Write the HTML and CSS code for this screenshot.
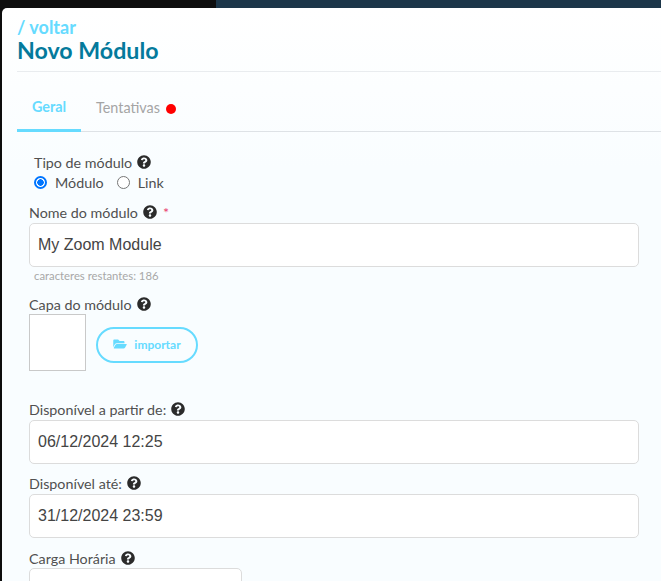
FILE: index.html
```html
<!DOCTYPE html>
<html lang="pt">
<head>
<meta charset="utf-8">
<title>Novo Módulo</title>
<link rel="stylesheet" href="styles.css">
</head>
<body>
<svg class="sprite" width="0" height="0" aria-hidden="true">
  <symbol id="q" viewBox="0 0 512 512"><path d="M504 256c0 136.997-111.043 248-248 248S8 392.997 8 256C8 119.083 119.043 8 256 8s248 111.083 248 248zM262.655 90c-54.497 0-89.255 22.957-116.549 63.758-3.536 5.286-2.353 12.415 2.715 16.258l34.699 26.31c5.205 3.947 12.621 3.008 16.665-2.122 17.864-22.658 30.113-35.797 57.303-35.797 20.429 0 45.698 13.148 45.698 32.958 0 14.976-12.363 22.667-32.534 33.976C247.128 238.528 216 254.941 216 296v4c0 6.627 5.373 12 12 12h56c6.627 0 12-5.373 12-12v-1.333c0-28.462 83.186-29.647 83.186-106.667 0-58.002-60.165-102-116.531-102zM256 338c-25.365 0-46 20.635-46 46 0 25.364 20.635 46 46 46s46-20.636 46-46c0-25.365-20.635-46-46-46z"/></symbol>
</svg>
<div class="backdrop"><div class="backdrop-dark"></div><div class="backdrop-blue"></div></div>
<main class="card">
  <header class="head">
    <a class="back">/ voltar</a>
    <h1 class="title">Novo Módulo</h1>
  </header>
  <nav class="tabs">
    <a class="tab tab-active">Geral</a>
    <a class="tab">Tentativas <span class="dot"></span></a>
  </nav>
  <form class="form">
    <div class="type-group">
      <div class="label">Tipo de módulo <svg class="help"><use href="#q"/></svg></div>
      <div class="radios">
        <label class="radio"><span class="radio-mark radio-on"></span>Módulo</label>
        <label class="radio"><span class="radio-mark"></span>Link</label>
      </div>
    </div>
    <div class="field field-name">
      <div class="label">Nome do módulo <svg class="help"><use href="#q"/></svg> <span class="req">*</span></div>
      <div class="input">My Zoom Module</div>
      <div class="hint">caracteres restantes: 186</div>
    </div>
    <div class="field field-cover">
      <div class="label">Capa do módulo <svg class="help"><use href="#q"/></svg></div>
      <div class="cover-row">
        <div class="cover"></div>
        <button type="button" class="import">
          <svg class="folder" viewBox="0 0 576 512"><path d="M572.694 292.093L500.27 416.248A63.997 63.997 0 0 1 444.989 448H45.025c-18.523 0-30.064-20.093-20.731-36.093l72.424-124.155A64 64 0 0 1 152 256h399.964c18.523 0 30.064 20.093 20.73 36.093zM152 224h328v-48c0-26.51-21.49-48-48-48H272l-64-64H48C21.49 64 0 85.49 0 112v278.046l69.077-118.418C86.214 242.25 117.989 224 152 224z"/></svg>
          importar
        </button>
      </div>
    </div>
    <div class="field field-from">
      <div class="label">Disponível a partir de: <svg class="help"><use href="#q"/></svg></div>
      <div class="input">06/12/2024 12:25</div>
    </div>
    <div class="field field-until">
      <div class="label">Disponível até: <svg class="help"><use href="#q"/></svg></div>
      <div class="input">31/12/2024 23:59</div>
    </div>
    <div class="field field-load">
      <div class="label">Carga Horária <svg class="help"><use href="#q"/></svg></div>
      <div class="input input-short"></div>
    </div>
  </form>
</main>
</body>
</html>
```
FILE: styles.css
```css
* { box-sizing: border-box; }
html, body { height: 100%; }
body {
  margin: 0;
  background: #0d0d0d;
  overflow: hidden;
  font-family: Lato, "Noto Sans", sans-serif;
  color: #505050;
}
.sprite { position: absolute; }
.backdrop { display: flex; height: 8px; }
.backdrop-dark { width: 216px; background: #0e0e0e; }
.backdrop-blue { flex: 1; background: #1c3649; }
.card {
  margin-left: 2px;
  height: 573px;
  padding-left: 15px;
  border-radius: 5px 0 0 0;
  background: linear-gradient(#ffffff, #f9fdff 160px);
  overflow: hidden;
}
.head {
  height: 64px;
  padding-top: 9px;
  border-bottom: 1px solid #e9ecef;
}
.back {
  display: block;
  font-size: 18px;
  font-weight: 700;
  line-height: 20px;
  color: #66dbff;
}
.title {
  margin: 0;
  font-size: 23.2px;
  font-weight: 700;
  line-height: 27px;
  color: #047a9c;
}
.tabs {
  display: flex;
  height: 60px;
  border-bottom: 1px solid #dee2e6;
}
.tab {
  width: 64px;
  height: 60px;
  padding-top: 26px;
  font-size: 14.4px;
  line-height: 18px;
  color: #a5a5a5;
  text-align: center;
  white-space: nowrap;
}
.tab + .tab { width: auto; margin-left: 15px; padding-top: 27px; }
.tab-active {
  font-weight: 700;
  color: #66dbff;
  border-bottom: 3px solid #66dbff;
}
.dot {
  display: inline-block;
  width: 10px;
  height: 10px;
  margin-left: 2px;
  border-radius: 50%;
  background: #ff0000;
  vertical-align: -1px;
}
.form { padding: 0 22px 0 12px; }
.type-group { padding: 20px 0 0 5px; }
.label {
  display: flex;
  align-items: center;
  gap: 5px;
  height: 20px;
  font-size: 14.3px;
  white-space: nowrap;
}
.help { width: 14px; height: 14px; fill: #2b2b2b; }
.req { color: #e8396b; margin-left: 1px; }
.radios { display: flex; gap: 13px; height: 21px; }
.radio { display: flex; align-items: center; gap: 8px; font-size: 14.3px; }
.radio-mark {
  width: 13px;
  height: 13px;
  border: 1px solid #767676;
  border-radius: 50%;
  background: #fff;
}
.radio-on {
  border: 2px solid #0075ff;
  background: radial-gradient(circle, #0075ff 0 3px, #fff 3.5px);
}
.field-name { margin-top: 9px; }
.field-cover { margin-top: 11px; }
.field-from { margin-top: 28px; }
.field-until { margin-top: 9px; }
.field-load { margin-top: 10px; }
.field .label { margin-bottom: 1px; }
.field-cover .label { margin-bottom: 0; }
.field-load .label { margin-bottom: 0; }
.input {
  height: 44px;
  padding: 0 8px;
  border: 1px solid #dcdcdc;
  border-radius: 5px;
  background: #fff;
  font-family: "Liberation Sans", Arial, sans-serif;
  font-size: 16px;
  line-height: 42px;
  color: #444;
}
.input-short { width: 213px; }
.hint {
  padding: 1px 0 0 5px;
  font-size: 11.3px;
  line-height: 15px;
  color: #a8a8a8;
}
.cover-row { display: flex; align-items: flex-start; gap: 10px; }
.cover { width: 57px; height: 57px; border: 1px solid #c9c9c9; background: #fff; }
.import {
  display: flex;
  align-items: center;
  justify-content: center;
  gap: 7px;
  width: 102px;
  height: 36px;
  margin-top: 13px;
  padding: 0 0 2px;
  border: 2px solid #66dbff;
  border-radius: 18px;
  background: transparent;
  font-family: inherit;
  font-size: 12px;
  font-weight: 700;
  color: #66dbff;
}
.folder { width: 14px; height: 12px; fill: #66dbff; }
```
